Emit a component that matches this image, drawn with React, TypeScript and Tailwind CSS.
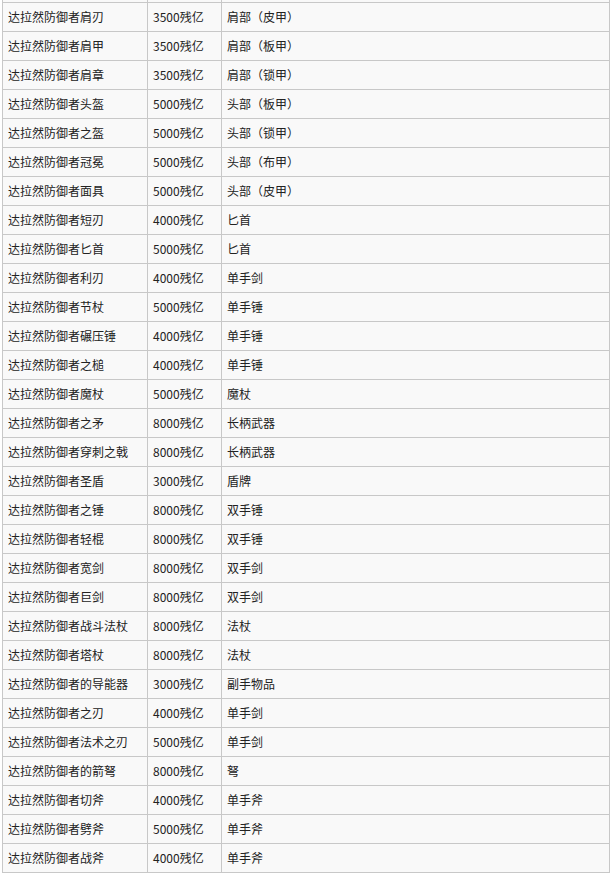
const rows: [string, string, string][] = [
  ["达拉然防御者肩刃", "3500残亿", "肩部（皮甲）"],
  ["达拉然防御者肩甲", "3500残亿", "肩部（板甲）"],
  ["达拉然防御者肩章", "3500残亿", "肩部（锁甲）"],
  ["达拉然防御者头盔", "5000残亿", "头部（板甲）"],
  ["达拉然防御者之盔", "5000残亿", "头部（锁甲）"],
  ["达拉然防御者冠冕", "5000残亿", "头部（布甲）"],
  ["达拉然防御者面具", "5000残亿", "头部（皮甲）"],
  ["达拉然防御者短刃", "4000残亿", "匕首"],
  ["达拉然防御者匕首", "5000残亿", "匕首"],
  ["达拉然防御者利刃", "4000残亿", "单手剑"],
  ["达拉然防御者节杖", "5000残亿", "单手锤"],
  ["达拉然防御者碾压锤", "4000残亿", "单手锤"],
  ["达拉然防御者之槌", "4000残亿", "单手锤"],
  ["达拉然防御者魔杖", "5000残亿", "魔杖"],
  ["达拉然防御者之矛", "8000残亿", "长柄武器"],
  ["达拉然防御者穿刺之戟", "8000残亿", "长柄武器"],
  ["达拉然防御者圣盾", "3000残亿", "盾牌"],
  ["达拉然防御者之锤", "8000残亿", "双手锤"],
  ["达拉然防御者轻棍", "8000残亿", "双手锤"],
  ["达拉然防御者宽剑", "8000残亿", "双手剑"],
  ["达拉然防御者巨剑", "8000残亿", "双手剑"],
  ["达拉然防御者战斗法杖", "8000残亿", "法杖"],
  ["达拉然防御者塔杖", "8000残亿", "法杖"],
  ["达拉然防御者的导能器", "3000残亿", "副手物品"],
  ["达拉然防御者之刃", "4000残亿", "单手剑"],
  ["达拉然防御者法术之刃", "5000残亿", "单手剑"],
  ["达拉然防御者的箭弩", "8000残亿", "弩"],
  ["达拉然防御者切斧", "4000残亿", "单手斧"],
  ["达拉然防御者劈斧", "5000残亿", "单手斧"],
  ["达拉然防御者战斧", "4000残亿", "单手斧"],
];

export default function App() {
  return (
    <div
      className="bg-white min-h-[875px] pl-[2px]"
      style={{ fontFamily: '"Noto Sans CJK SC", "Noto Sans", sans-serif' }}
    >
      <table className="table-fixed border-collapse w-[608px] bg-[#f9f9f9] text-[12px] text-[#222] leading-none">
        <colgroup>
          <col className="w-[145px]" />
          <col className="w-[74px]" />
          <col />
        </colgroup>
        <tbody>
          {/* tail of the row above, cut off by the crop */}
          <tr className="h-[2px]">
            <td className="border-x border-[#c8c8c8] p-0" />
            <td className="border-x border-[#c8c8c8] p-0" />
            <td className="border-x border-[#c8c8c8] p-0" />
          </tr>
          {rows.map(([name, price, slot]) => (
            <tr key={name} className="h-[29px]">
              <td className="border border-[#c8c8c8] px-[5px] whitespace-nowrap">{name}</td>
              <td className="border border-[#c8c8c8] px-[5px] whitespace-nowrap">{price}</td>
              <td className="border border-[#c8c8c8] px-[5px] whitespace-nowrap">{slot}</td>
            </tr>
          ))}
        </tbody>
      </table>
    </div>
  );
}
